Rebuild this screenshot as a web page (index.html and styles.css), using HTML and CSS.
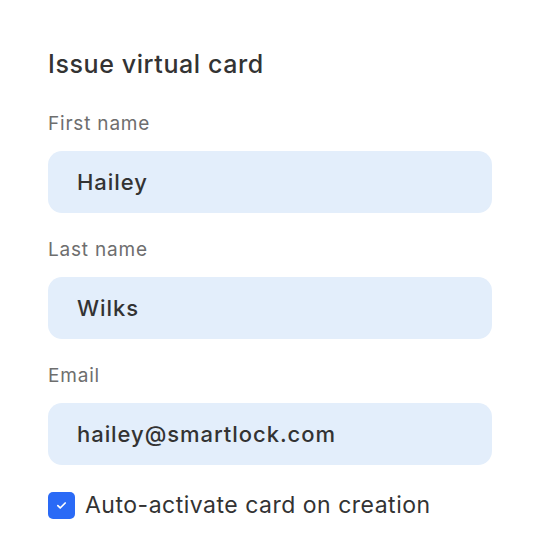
FILE: index.html
```html
<!DOCTYPE html>
<html>
<head>
<meta charset="utf-8">
<link rel="stylesheet" href="styles.css">
</head>
<body>
<div class="card">
  <h1 class="title">Issue virtual card</h1>
  <div class="field">
    <label class="label">First name</label>
    <div class="input">Hailey</div>
  </div>
  <div class="field">
    <label class="label">Last name</label>
    <div class="input">Wilks</div>
  </div>
  <div class="field">
    <label class="label">Email</label>
    <div class="input">hailey@smartlock.com</div>
  </div>
  <div class="check-row">
    <span class="checkbox">
      <svg width="13" height="13" viewBox="0 0 12 12"><path d="M2.6 6.2l2.2 2.1 4.6-4.6" fill="none" stroke="#fff" stroke-width="1.6" stroke-linecap="round" stroke-linejoin="round"/></svg>
    </span>
    <span class="check-label">Auto-activate card on creation</span>
  </div>
</div>
</body>
</html>
```
FILE: styles.css
```css
* { box-sizing: border-box; }
html, body { margin: 0; padding: 0; background: #fff; }
body { font-family: Inter, "Noto Sans", sans-serif; color: #333; }
.card {
  width: 540px;
  height: 558px;
  padding: 50px 48px 0;
  background: #fff;
  border-radius: 20px;
}
.title {
  margin: 0 0 34px;
  font-size: 25px;
  line-height: 29px;
  font-weight: 500;
  color: #333;
  letter-spacing: 0.6px;
}
.field { display: flex; flex-direction: column; margin-bottom: 26px; }
.label {
  font-size: 19px;
  line-height: 22px;
  color: #6e6e6e;
  margin-bottom: 16px;
  letter-spacing: 0.8px;
  font-weight: 400;
}
.input {
  height: 62px;
  border-radius: 14px;
  background: #e3eefb;
  padding: 0 29px;
  display: flex;
  align-items: center;
  font-size: 22px;
  font-weight: 550;
  letter-spacing: 0.95px;
  color: #333;
}
.check-row { display: flex; align-items: center; gap: 10px; margin-top: 5px; }
.checkbox {
  width: 27px; height: 27px;
  border-radius: 5px;
  background: #2a6af6;
  display: flex; align-items: center; justify-content: center;
}
.check-label { font-size: 23px; line-height: 28px; color: #333; letter-spacing: 0.5px; }
```
